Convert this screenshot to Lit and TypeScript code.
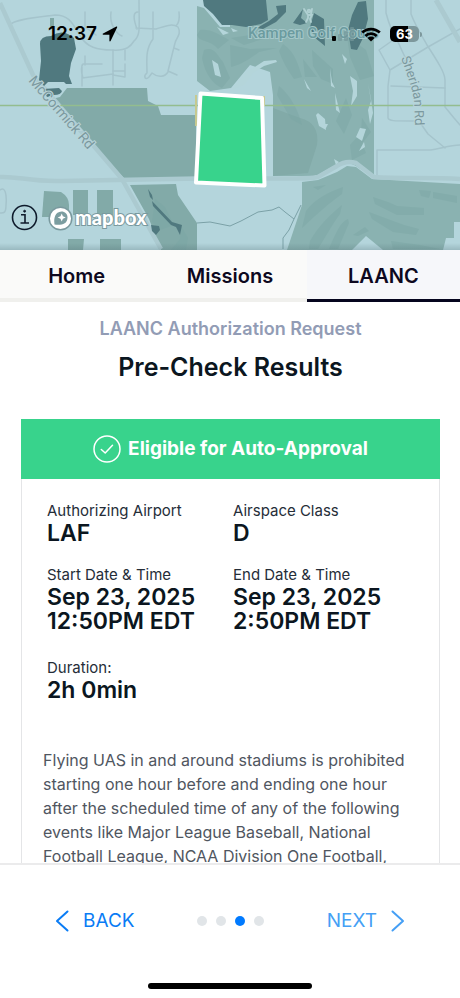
import { LitElement, html, svg, css } from "lit";
import { customElement, property, state } from "lit/decorators.js";
import { classMap } from "lit/directives/class-map.js";

@customElement("status-bar")
class StatusBar extends LitElement {
  static styles = css`
    :host {
      display: flex;
      align-items: center;
      justify-content: space-between;
      padding: 0 38px 0 48px;
      height: 68px;
      color: #000;
      font-family: Inter, "Liberation Sans", sans-serif;
    }
    .side {
      display: flex;
      align-items: center;
      gap: 5px;
    }
    .time {
      font-size: 19px;
      font-weight: 600;
      line-height: 24px;
    }
    svg {
      display: block;
    }
    .battery {
      display: flex;
      align-items: center;
      gap: 1px;
      margin-left: 4px;
    }
    .level {
      width: 29px;
      height: 16px;
      border-radius: 5px;
      background: linear-gradient(90deg, #000 63%, #7d989c 63%);
      color: #fff;
      font-size: 13px;
      font-weight: 700;
      line-height: 16px;
      text-align: center;
    }
    .cap {
      width: 2px;
      height: 5px;
      border-radius: 0 2px 2px 0;
      background: #7d989c;
    }
  `;

  render() {
    return html`
      <div class="side">
        <span class="time">12:37</span>
        <svg width="16" height="16" viewBox="0 0 16 16" aria-hidden="true">
          <path d="M15.2 1.2 8.6 15c-.3.6-1.2.5-1.2-.3V8.8H1.3c-.8 0-.9-.9-.2-1.2L14.4.6c.6-.2 1 .1.8.6Z" />
        </svg>
      </div>
      <div class="side">
        <svg width="24" height="16" viewBox="0 0 24 16" aria-hidden="true">
          <rect x="0" y="10" width="4" height="5" rx="1" />
          <g fill="#74989b" opacity=".7">
            <rect x="6" y="8" width="4" height="7" rx="1" />
            <rect x="12" y="5" width="4" height="10" rx="1" />
            <rect x="18" y="1" width="4" height="14" rx="1" />
          </g>
        </svg>
        <svg width="20" height="15" viewBox="0 0 20 15" aria-hidden="true">
          <path
            d="M1.2 5.6a12.8 12.8 0 0 1 17.6 0M4.3 8.9a8.3 8.3 0 0 1 11.4 0"
            fill="none" stroke="#000" stroke-width="2.7" />
          <path d="M10 14.6 6.4 11a5.2 5.2 0 0 1 7.2 0Z" />
        </svg>
        <div class="battery"><span class="level">63</span><span class="cap"></span></div>
      </div>
    `;
  }
}

@customElement("area-map")
class AreaMap extends LitElement {
  static styles = css`
    :host {
      display: block;
      position: relative;
      background: #b4d5dc;
      overflow: hidden;
    }
    .canvas {
      display: block;
      width: 100%;
      height: 100%;
    }
    .label {
      font-family: Roboto, "Liberation Sans", sans-serif;
      font-size: 14px;
      fill: #7b999f;
      stroke: #b9d5da;
      stroke-width: 2px;
      paint-order: stroke;
    }
    .small {
      font-size: 13px;
    }
    .place {
      font-size: 15px;
      font-weight: 500;
      fill: #6b9b9f;
      stroke: #a5c8ca;
    }
    .tools {
      position: absolute;
      left: 11px;
      bottom: 18px;
      display: flex;
      align-items: center;
      gap: 10px;
    }
    .info {
      border: 0;
      padding: 0 0 1px;
      background: none;
      cursor: pointer;
    }
    svg {
      display: block;
    }
    .brand {
      display: flex;
      align-items: center;
      gap: 2px;
      color: #fff;
      text-decoration: none;
      font-family: Lato, "Open Sans", sans-serif;
      font-size: 20px;
      font-weight: 900;
      line-height: 24px;
    }
    .word {
      -webkit-text-stroke: 2px #79999e;
      paint-order: stroke;
      padding-bottom: 2px;
    }
  `;

  private roads() {
    return svg`
      <g fill="none" stroke="#a5c4cc" stroke-width="1.5" stroke-linejoin="round" stroke-linecap="round">
        <path d="M10 25C14 19 40 17 55 15C72 15 74 28 81 37C87 47 97 50 112 50C127 51 131 46 134 41C141 35 139 27 139 0" />
        <path d="M85 12V27L96 35M111 12C109 25 117 34 122 36M113 50V85M137 29C133 18 133 12 138 12M136 28L156 29C166 26 172 23 178 27C182 34 176 38 175 43L168 71L177 75M153 12V39C145 50 147 60 147 73M179 12C180 20 178 24 176 26M147 73C143 76 145 81 149 77L152 73C158 78 165 77 168 72M174 48L179 50" />
        <path d="M85 56V65M102 64H83C80 68 82 75 83 78M82 65V86M82 78L113 74M125 50V60M125 64V77L113 75M113 71H125" />
        <path d="M386 0V13C390 28 394 36 399 44C404 56 411 68 414 77M411 0V14C416 27 422 36 427 45C438 62 445 73 445 80V107L454 118L460 125" />
        <path d="M460 29L428 47L390 70L379 50L396 38M390 70L388 86V118C389 121 394 121 410 121H415M391 86L445 88" />
        <path d="M377 175V150H430C440 149 449 145 460 145M421 124L428 134L445 148" />
        <path d="M0 190C5 186 7 194 6 205C6 214 3 213 0 213" />
      </g>
      <g fill="none" stroke="#abcad0">
        <path d="M0 3L33 75L122 179L161 249" stroke-width="4.5" />
        <path d="M0 177C18 176 30 182 62 181L225 178C270 178 305 180 318 177L337 166Q346 160 356 163L374 177C400 179 430 177 460 179" stroke-width="4.5" />
        <path d="M436 0L460 42" stroke-width="5" />
      </g>`;
  }

  private parks() {
    return svg`
      <g fill="#82aaa8">
        <path d="M67 88H147L148 101L158 106L161 115H196V178H124L95 148L52 99L60 97Z" />
        <path d="M50 18H54V28H50Z" />
        <path d="M44 191L61 192Q69 197 69 205V213L57 217H42Z" />
        <path d="M73 190H88V215H73ZM97 190H113V215H97ZM68 239H84L83 250H68ZM100 239H121V250H100Z" />
        <path d="M130 185L176 184L178 195L197 223V250H161L149 219Z" />
      </g>
      <g fill="#8ab2b1">
        <path d="M197 6L204 8L220 27H230V0H374V177L359 168Q346 158 330 168L316 176H273V95L270 72L250 65L231 88L210 91L197 81Z" />
        <path d="M302 182L318 180L337 172L347 166L356 167L372 179L460 184V222H454V238H446L443 250H383L366 236L352 250H287L302 205Z" />
      </g>
      <path d="M273 108L300 118Q320 123 317 145L308 173L273 176Z" fill="#82aaa8" />
      <g fill="#7ba6a4" opacity=".45">
        <path d="M200 30C212 29 217 34 229 40L218 49C210 39 200 43 197 35ZM204 50C214 46 217 55 223 62L230 78L222 88C213 84 205 74 202 58ZM230 45L250 49L277 48L259 52C247 61 239 65 231 67ZM231 38L250 35L263 39L244 45Z" />
        <path d="M283 44C296 53 298 65 302 77L294 79C287 69 282 60 279 51ZM303 59L317 77L305 77ZM312 50L333 69V84L321 79L313 66ZM347 36L366 50L374 76L360 80L350 57ZM279 86C291 96 298 110 302 125L291 119L277 95ZM346 98L352 115L344 134L336 121ZM362 118L371 132L360 146ZM350 145L359 135L366 153L352 160Z" />
        <path d="M306 211C315 199 327 193 343 187L342 194C329 203 317 214 302 228ZM310 241C319 225 331 214 342 205L340 214C331 226 325 238 318 249H309ZM329 249C335 235 340 222 348 219L349 223L338 249ZM373 197L388 202L397 206L424 208V215H397L375 204ZM369 212L385 218L404 225L419 229L416 235L393 232L372 219ZM391 241L420 245L440 249H393ZM419 190L431 191L429 198L421 196ZM433 192L457 196V203L433 198ZM313 187L326 185L318 190ZM353 235L365 227L360 222L369 231L358 236Z" />
        <path d="M155 199L165 207L174 225L160 230L152 222ZM181 226L188 238L186 250H171L180 239Z" />
      </g>
      <g fill="#b4d5da">
        <path d="M250 70L264 61L276 60L277 62L264 66L253 73L244 85L232 90L239 80L247 71Z" />
        <path d="M212 60L218 64L221 77L215 75ZM217 27L229 33L223 35ZM231 28L238 31L233 32ZM342 54L347 59L345 64ZM330 68L332 82L335 88L331 86ZM335 93L340 113L336 110ZM304 79L311 91L307 88ZM350 76L357 81V96L351 106L353 91ZM368 83L371 99L373 113L370 124L368 110L371 101ZM318 113L325 119L326 130L319 126L316 115ZM322 124H328L326 128ZM360 128L366 129L362 141L356 137ZM364 142L365 147L359 151ZM334 159L339 162L336 165Z" />
      </g>`;
  }

  private water() {
    return svg`
      <g fill="#50797f">
        <path d="M40 44Q40 36 51 36Q63 28 74 38L76 49L71 63L69 76L72 84L66 84L64 82H48L44 86L39 80L41 61Z" />
        <path d="M43 89L59 88L62 91Q61 95 54 95L47 97Z" />
        <path d="M203 0H266L268 20L261 24L246 27L232 25L222 25L213 14L204 6Z" />
        <path d="M276 6L286 5L286 12L276 22L263 29L257 28L269 21L278 14ZM303 9L301 18L307 23L300 25L293 23ZM314 13L324 19L325 46L314 37L310 27ZM358 2L366 1L368 19L363 38L357 50L351 49L348 30L352 15Z" />
        <path d="M148 189L152 195L153 200L150 197ZM152 201L172 222L182 225L180 235L176 227L171 225L153 206ZM151 225L159 226L160 230L156 235L152 231Z" />
      </g>
      <path d="M197 223L210 222L230 226L241 221L258 212L272 210L279 207L285 212L294 219L301 205M294 219L289 230L283 238V249" fill="none" stroke="#7ba1a7" />`;
  }

  render() {
    return html`
      <svg class="canvas" viewBox="0 0 460 250" preserveAspectRatio="xMidYMid slice" role="img" aria-label="Operation area">
        <defs>
          <linearGradient id="shade" x1="0" y1="0" x2="0" y2="1">
            <stop offset="0" stop-color="#49666c" stop-opacity="0" />
            <stop offset="1" stop-color="#49666c" stop-opacity=".25" />
          </linearGradient>
          <path id="sheridan" d="M401 58C406 72 411 84 414 100L416 150" />
        </defs>
        ${this.parks()} ${this.roads()} ${this.water()}
        <path d="M0 105.5H460" stroke="#93bd8e" stroke-width="1.3" />
        <path d="M196 95V126M264 96V106" stroke="#c6c990" stroke-width="2" />
        <path d="M200.500 93.500L262 98L264.500 185.500L196 182.500Z" fill="#38d38c" stroke="#fff" stroke-width="4" stroke-linejoin="round" />
        <text class="label" transform="translate(28 81) rotate(49)">McCormick Rd</text>
        <text class="label small"><textPath href="#sheridan">Sheridan Rd</textPath></text>
        <text class="label place" x="248" y="38">Kampen Golf Cours</text>
        <g fill="none" stroke="#b0d0d2" stroke-width="1.8" stroke-linecap="round">
          <circle cx="309" cy="11" r="1.3" />
          <path d="M304 9L308 15H312L310 19L311 22M308 15V18L306 22M312 9L311 14" />
        </g>
        <rect y="243" width="460" height="7" fill="url(#shade)" />
      </svg>
      <div class="tools">
        <button class="info" aria-label="Map information">
          <svg width="27" height="27" viewBox="0 0 27 27" fill="none" stroke="#0e1a2b" stroke-width="1.6">
            <circle cx="13.5" cy="13.5" r="12" />
            <path d="M10 10.8H14V18.5M9.5 19H18" />
            <circle cx="13.6" cy="7.2" r="1" fill="#0e1a2b" stroke-width=".8" />
          </svg>
        </button>
        <a class="brand" href="#mapbox">
          <svg width="25" height="25" viewBox="0 0 25 25" aria-hidden="true">
            <circle cx="12.5" cy="12.5" r="11.3" fill="#fff" stroke="#79999e" stroke-width="1.5" />
            <path d="M6.5 18.5C5.5 12 7 6 13.5 5.500C17 5.5 19.5 8 19.5 11.5C19.5 18 13 19.5 6.5 18.5Z" fill="#7b9da0" />
            <path d="M13.700 7.5L14.9 10.3L17.7 11.5L14.9 12.7L13.7 15.5L12.5 12.7L9.7 11.5L12.5 10.3Z" fill="#fff" />
          </svg>
          <span class="word">mapbox</span>
        </a>
      </div>
    `;
  }
}

@customElement("detail-item")
class DetailItem extends LitElement {
  @property() label = "";
  @property() value = "";

  static styles = css`
    :host {
      display: block;
    }
    dl,
    dd {
      margin: 0;
    }
    dt {
      font-size: 15px;
      line-height: 20px;
      color: #252d38;
    }
    dd {
      font-size: 23px;
      font-weight: 600;
      line-height: 24px;
      color: #0b1620;
      white-space: pre-line;
    }
  `;

  render() {
    return html`<dl>
      <dt>${this.label}</dt>
      <dd>${this.value}</dd>
    </dl>`;
  }
}

@customElement("app-root")
class AppRoot extends LitElement {
  @state() private tab = "LAANC";
  private tabs = ["Home", "Missions", "LAANC"];
  private steps = [1, 2, 3, 4];
  private step = 3;

  static styles = css`
    :host {
      display: flex;
      flex-direction: column;
      height: 100vh;
      background: #fff;
      font-family: Inter, "Liberation Sans", sans-serif;
      color: #0b1620;
    }
    .top {
      position: relative;
      flex: none;
    }
    area-map {
      height: 250px;
    }
    status-bar {
      position: absolute;
      inset: 0 0 auto;
    }
    .tabs {
      flex: none;
      display: grid;
      grid-template-columns: repeat(3, 1fr);
    }
    .tab {
      padding: 13px 0 9px;
      border-bottom: 4px solid #f0f0ed;
      background: #fafaf9;
      color: #0d0820;
      font-size: 20px;
      font-weight: 600;
      line-height: 26px;
      text-align: center;
      text-decoration: none;
    }
    .tab.active {
      border-bottom: 3px solid #05051e;
      padding-bottom: 10px;
      background: #f6f7fa;
    }
    main {
      flex: 1;
      min-height: 0;
      overflow-y: auto;
      scrollbar-width: none;
      padding: 15px 20px 0 21px;
    }
    .kicker,
    h1 {
      margin: 0;
      text-align: center;
    }
    .kicker {
      color: #929cb5;
      font-size: 18px;
      font-weight: 600;
      line-height: 24px;
    }
    h1 {
      padding-top: 10px;
      font-size: 25px;
      font-weight: 600;
      line-height: 32px;
    }
    .card {
      margin-top: 36px;
      border: 1px solid #e4e5e7;
      border-top: 0;
    }
    .banner {
      display: flex;
      align-items: center;
      justify-content: center;
      gap: 7px;
      margin: 0 -1px;
      padding: 16px 0;
      background: #38d38c;
      color: #fff;
      font-size: 19px;
      font-weight: 700;
      line-height: 28px;
    }
    svg {
      display: block;
    }
    .details {
      display: grid;
      grid-template-columns: 186px 1fr;
      gap: 20px 0;
      padding: 22px 20px 0 25px;
    }
    .last {
      padding-top: 5px;
    }
    .note {
      margin: 0;
      padding: 46px 24px 24px 21px;
      color: #50565f;
      font-size: 16px;
      line-height: 24px;
    }
    footer {
      flex: none;
      display: flex;
      flex-direction: column;
      align-items: center;
      justify-content: space-between;
      border-top: 2px solid #ebebec;
      padding: 42px 0 9px;
      gap: 48px;
    }
    .pager {
      display: flex;
      align-items: center;
      justify-content: space-between;
      align-self: stretch;
      padding: 0 55px;
    }
    .nav {
      display: flex;
      align-items: center;
      gap: 14px;
      border: 0;
      padding: 0;
      background: none;
      color: #0a7cf5;
      font-family: inherit;
      font-size: 19px;
      line-height: 28px;
      cursor: pointer;
    }
    .next {
      color: #459ff5;
    }
    .dots {
      display: flex;
      gap: 9px;
    }
    .dot {
      width: 10px;
      height: 10px;
      border-radius: 50%;
      background: #e1e5e8;
    }
    .dot.current {
      background: #007aff;
    }
    .home {
      width: 164px;
      height: 6px;
      border-radius: 3px;
      background: #000;
    }
  `;

  render() {
    return html`
      <div class="top">
        <area-map></area-map>
        <status-bar></status-bar>
      </div>
      <nav class="tabs">
        ${this.tabs.map(
          (t) => html`<a
            href="#${t.toLowerCase()}"
            class=${classMap({ tab: true, active: t === this.tab })}
            @click=${() => (this.tab = t)}
            >${t}</a
          >`
        )}
      </nav>
      <main>
        <p class="kicker">LAANC Authorization Request</p>
        <h1>Pre-Check Results</h1>
        <section class="card">
          <div class="banner">
            <svg width="28" height="28" viewBox="0 0 28 28" fill="none" stroke="#fff" stroke-width="1.5" stroke-linecap="round" stroke-linejoin="round" aria-hidden="true">
              <circle cx="14" cy="14" r="13" />
              <path d="M8.3 14.5L12.2 18L19.5 10.3" />
            </svg>
            <span>Eligible for Auto-Approval</span>
          </div>
          <div class="details">
            <detail-item label="Authorizing Airport" value="LAF"></detail-item>
            <detail-item label="Airspace Class" value="D"></detail-item>
            <detail-item label="Start Date & Time" .value=${"Sep 23, 2025\n12:50PM EDT"}></detail-item>
            <detail-item label="End Date & Time" .value=${"Sep 23, 2025\n2:50PM EDT"}></detail-item>
            <detail-item class="last" label="Duration:" value="2h 0min"></detail-item>
          </div>
          <p class="note">
            Flying UAS in and around stadiums is prohibited starting one hour before and ending one hour after the
            scheduled time of any of the following events like Major League Baseball, National Football League, NCAA
            Division One Football,
          </p>
        </section>
      </main>
      <footer>
        <div class="pager">
          <button class="nav">
            <svg width="14" height="22" viewBox="0 0 14 22" fill="none" stroke="currentColor" stroke-width="2" stroke-linecap="round" stroke-linejoin="round" aria-hidden="true">
              <path d="M12.5 1.5L2 11L12.5 20.5" />
            </svg>
            BACK
          </button>
          <div class="dots">
            ${this.steps.map((s) => html`<span class=${classMap({ dot: true, current: s === this.step })}></span>`)}
          </div>
          <button class="nav next">
            NEXT
            <svg width="14" height="22" viewBox="0 0 14 22" fill="none" stroke="currentColor" stroke-width="2" stroke-linecap="round" stroke-linejoin="round" aria-hidden="true">
              <path d="M1.5 1.5L12 11L1.5 20.5" />
            </svg>
          </button>
        </div>
        <div class="home"></div>
      </footer>
    `;
  }
}
